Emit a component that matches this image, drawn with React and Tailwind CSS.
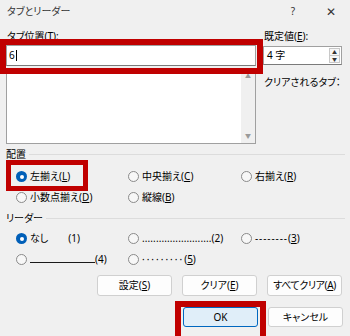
import React from 'react';

const K = ({ children }) => <span className="underline underline-offset-[1px]">{children}</span>;

function Radio({ on }) {
  if (on) {
    return (
      <span className="w-[11px] h-[11px] rounded-full bg-[#005fb8] flex items-center justify-center shrink-0">
        <span className="w-[4px] h-[4px] rounded-full bg-white" />
      </span>
    );
  }
  return <span className="w-[11px] h-[11px] rounded-full border border-[#8a8a8a] bg-[#f7f7f7] shrink-0" />;
}

function Option({ on, children }) {
  return (
    <div className="flex items-center gap-[3px] whitespace-nowrap">
      <Radio on={on} />
      <span>{children}</span>
    </div>
  );
}

function Section({ title }) {
  return (
    <div className="flex items-center h-[13px] pl-[6px] pr-[5px] gap-[3px]">
      <span>{title}</span>
      <span className="flex-1 h-px bg-[#dcdcdc]" />
    </div>
  );
}

function Btn({ children, primary }) {
  return (
    <button
      className={
        primary
          ? 'w-[75px] h-full rounded-[3px] border border-[#0067c0] bg-[#e0eef9] flex items-center justify-center'
          : 'w-[75px] h-full rounded-[3px] border border-[#d0d0d0] bg-[#fdfdfd] flex items-center justify-center whitespace-nowrap'
      }
    >
      {children}
    </button>
  );
}

export default function App() {
  return (
    <div className="w-[350px] h-[336px] overflow-hidden bg-[#f0f0f0] text-[#000] text-[10px] leading-[13px] font-['Noto_Sans','Noto_Sans_CJK_JP',sans-serif] [font-feature-settings:'palt']">
      {/* タイトルバー */}
      <div className="flex items-center h-[22px] pl-[7px] text-[#333]">
        <span className="flex-1">タブとリーダー</span>
        <span className="w-[38px] text-center">?</span>
        <span className="w-[38px] text-center text-[12px]">✕</span>
      </div>

      {/* タブ位置・既定値 */}
      <div className="flex mt-[8px]">
        <div className="ml-[6px] w-[250px]">
          <div className="h-[13px] pl-[1px]">
            タブ位置(<K>T</K>):
          </div>
          <div className="relative mt-[2px] h-[21px] bg-white border border-[#a0a0a0] border-b-[#7a7a7a] flex items-center pl-[2px]">
            <span>6</span>
            <span className="w-px h-[11px] bg-black ml-px" />
            <span className="absolute z-10 left-[-7px] top-[-7px] w-[263px] h-[35px] border-[6px] border-[#c00000]" />
          </div>
          <div className="mt-[2px] h-[76px] bg-white border border-[#a0a0a0] flex justify-end">
            <div className="w-[14px] bg-[#f0f0f0] flex flex-col justify-between items-center py-[4px] text-[6px] leading-[6px] text-[#9a9a9a]">
              <span>▲</span>
              <span>▼</span>
            </div>
          </div>
        </div>
        <div className="ml-[7px] w-[79px]">
          <div className="h-[13px] pl-[1px]">
            既定値(<K>E</K>):
          </div>
          <div className="mt-[3px] h-[19px] bg-white border border-[#a0a0a0] border-b-[#7a7a7a] flex">
            <span className="flex-1 pl-[3px] flex items-center">4 字</span>
            <div className="w-[11px] my-[1px] mr-[1px] flex flex-col border border-[#c8c8c8] bg-[#f7f7f7] text-[5px] leading-[5px] text-[#333]">
              <span className="flex-1 flex items-center justify-center border-b border-[#c8c8c8]">▲</span>
              <span className="flex-1 flex items-center justify-center">▼</span>
            </div>
          </div>
          <div className="mt-[11px] h-[13px] pl-[1px]">クリアされるタブ：</div>
        </div>
      </div>

      {/* 配置 */}
      <div className="mt-[4px]">
        <Section title="配置" />
        <div className="mt-[5px] pl-[16px] grid grid-cols-[112px_113px_1fr] grid-rows-[21px_21px] items-center">
          <div className="relative">
            <Option on>
              左揃え(<K>L</K>)
            </Option>
            <span className="absolute z-10 left-[-10px] top-[-10px] w-[82px] h-[31px] border-[5px] border-[#c00000]" />
          </div>
          <Option>
            中央揃え(<K>C</K>)
          </Option>
          <Option>
            右揃え(<K>R</K>)
          </Option>
          <Option>
            小数点揃え(<K>D</K>)
          </Option>
          <Option>
            縦線(<K>B</K>)
          </Option>
        </div>
      </div>

      {/* リーダー */}
      <div className="mt-[4px]">
        <Section title="リーダー" />
        <div className="mt-[3px] pl-[16px] grid grid-cols-[112px_113px_1fr] grid-rows-[21px_21px] items-center">
          <Option on>
            なし<span className="ml-[20px]">(1)</span>
          </Option>
          <Option>
            <span className="tracking-[0.1px]">.........................</span>(2)
          </Option>
          <Option>
            <span className="tracking-[0.9px]">--------</span>(<K>3</K>)
          </Option>
          <Option>
            <span className="inline-block w-[65px] h-[9px] border-b border-[#1a1a1a] align-baseline" />
            (4)
          </Option>
          <Option>
            <span className="tracking-[2px]">·········</span>(<K>5</K>)
          </Option>
        </div>
      </div>

      {/* ボタン */}
      <div className="mt-[5px] h-[21px] flex justify-end gap-[10px] pr-[8px]">
        <Btn>
          設定(<K>S</K>)
        </Btn>
        <Btn>
          クリア(<K>E</K>)
        </Btn>
        <Btn>
          <span className="tracking-[-0.4px]">
            すべてクリア(<K>A</K>)
          </span>
        </Btn>
      </div>
      <div className="mt-[11px] h-[20px] flex justify-end gap-[10px] pr-[7px]">
        <div className="relative h-full">
          <Btn primary>OK</Btn>
          <span className="absolute z-10 left-[-8px] top-[-6px] right-[-8px] bottom-[-15px] border-[6px] border-[#c00000]" />
        </div>
        <Btn>キャンセル</Btn>
      </div>
    </div>
  );
}
